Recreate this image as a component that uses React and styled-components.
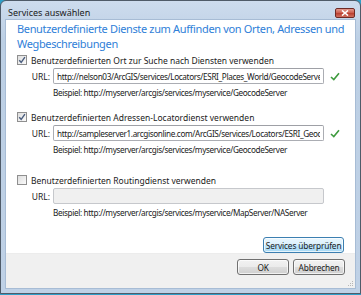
import React from "react";
import styled, { createGlobalStyle } from "styled-components";

const GlobalStyle = createGlobalStyle`
  html, body {
    margin: 0;
    padding: 0;
    background: #2f9fc9;
  }
  body {
    font-family: "Noto Sans", "Open Sans", sans-serif;
    color: #1e1e1e;
  }
`;

const sections = [
  {
    label: "Benutzerdefinierten Ort zur Suche nach Diensten verwenden",
    checked: true,
    url: "http://nelson03/ArcGIS/services/Locators/ESRI_Places_World/GeocodeServer",
    example: "Beispiel: http://myserver/arcgis/services/myservice/GeocodeServer",
    gap: 3,
  },
  {
    label: "Benutzerdefinierten Adressen-Locatordienst verwenden",
    checked: true,
    url: "http://sampleserver1.arcgisonline.com/ArcGIS/services/Locators/ESRI_Geocode_USA/GeocodeServer",
    example: "Beispiel: http://myserver/arcgis/services/myservice/GeocodeServer",
    gap: 12,
  },
  {
    label: "Benutzerdefinierten Routingdienst verwenden",
    checked: false,
    url: "",
    example: "Beispiel: http://myserver/arcgis/services/myservice/MapServer/NAServer",
    gap: 18,
  },
];

const App = () => {
  return (
    <>
      <GlobalStyle />
      <Window>
        <TitleBar>
          <Title>Services auswählen</Title>
          <CloseButton>
            <svg width="8" height="6" viewBox="0 0 8 6">
              <path d="M1 0.5 L7 5.5 M7 0.5 L1 5.5" stroke="#fff" strokeWidth="1.6" />
            </svg>
          </CloseButton>
        </TitleBar>
        <Frame>
          <Client>
            <Content>
              <Heading>
                Benutzerdefinierte Dienste zum Auffinden von Orten, Adressen und
                <br />
                Wegbeschreibungen
              </Heading>
              {sections.map((s) => (
                <Section key={s.label} $gap={s.gap}>
                  <CheckRow>
                    <CheckBox>
                      {s.checked && (
                        <svg width="8" height="8" viewBox="0 0 8 8">
                          <path d="M1.2 4.2 L3.2 6.3 L6.9 1.2" fill="none" stroke="#4a5d7e" strokeWidth="1.4" />
                        </svg>
                      )}
                    </CheckBox>
                    <Label>{s.label}</Label>
                  </CheckRow>
                  <UrlRow>
                    <UrlLabel>URL:</UrlLabel>
                    <UrlInput readOnly value={s.url} disabled={!s.checked} />
                    {s.checked && (
                      <OkMark width="10" height="9" viewBox="0 0 10 9">
                        <path d="M1 5 L3.8 7.6 L9 1.2" fill="none" stroke="#3e9b3e" strokeWidth="1.6" />
                      </OkMark>
                    )}
                  </UrlRow>
                  <Example>{s.example}</Example>
                </Section>
              ))}
              <CheckButtonRow>
                <Button $primary $width={81}>Services überprüfen</Button>
              </CheckButtonRow>
            </Content>
            <Footer>
              <Button $width={52}>OK</Button>
              <Button $width={52}>Abbrechen</Button>
              <Grip width="6" height="6" viewBox="0 0 6 6">
                <rect x="4" y="0" width="1" height="1" fill="#b7b7b7" />
                <rect x="2" y="2" width="1" height="1" fill="#b7b7b7" />
                <rect x="4" y="2" width="1" height="1" fill="#b7b7b7" />
                <rect x="0" y="4" width="1" height="1" fill="#b7b7b7" />
                <rect x="2" y="4" width="1" height="1" fill="#b7b7b7" />
                <rect x="4" y="4" width="1" height="1" fill="#b7b7b7" />
              </Grip>
            </Footer>
          </Client>
        </Frame>
      </Window>
    </>
  );
};

export default App;

const Window = styled.div`
  width: 361px;
  height: 294px;
  box-sizing: border-box;
  border: 1px solid #4f5b69;
  border-radius: 6px 6px 0 0;
  background: linear-gradient(#cddcee, #bccfe4 40px, #bfd1e6);
  display: flex;
  flex-direction: column;
  overflow: hidden;
`;

const TitleBar = styled.div`
  height: 18px;
  flex-shrink: 0;
  display: flex;
  justify-content: space-between;
  align-items: flex-start;
  padding-left: 7px;
  padding-right: 5px;
`;

const Title = styled.span`
  font-size: 9px;
  line-height: 10px;
  margin-top: 7px;
  color: #1b1b1b;
`;

const CloseButton = styled.div`
  width: 18px;
  height: 8px;
  margin-top: 7px;
  border: 1px solid #6e2a25;
  border-radius: 2px;
  background: linear-gradient(#e39a8e, #c9584a 50%, #b83c2d 51%, #d07060);
  display: flex;
  align-items: center;
  justify-content: center;
`;

const Frame = styled.div`
  flex: 1;
  min-height: 0;
  display: flex;
  padding: 0 8px 4px 4px;
`;

const Client = styled.div`
  flex: 1;
  min-height: 0;
  display: flex;
  flex-direction: column;
  border: 1px solid #a7bcd5;
  background: #fff;
`;

const Content = styled.div`
  flex: 1;
  min-height: 0;
  overflow: hidden;
  padding: 1px 11px 0 11px;
  display: flex;
  flex-direction: column;
`;

const Heading = styled.div`
  font-size: 11px;
  letter-spacing: -0.35px;
  line-height: 15px;
  white-space: nowrap;
  color: #2f80d8;
`;

const Section = styled.div`
  margin-top: ${(p) => p.$gap}px;
  display: flex;
  flex-direction: column;
`;

const CheckRow = styled.div`
  height: 12px;
  display: flex;
  align-items: center;
`;

const CheckBox = styled.span`
  width: 8px;
  height: 8px;
  border: 1px solid #8f8f8f;
  background: linear-gradient(135deg, #dedede, #fafafa);
  display: flex;
  align-items: center;
  justify-content: center;
  margin-right: 4px;
`;

const Label = styled.span`
  font-size: 8.5px;
  color: #1a1a1a;
  white-space: nowrap;
`;

const UrlRow = styled.div`
  margin-top: 2px;
  height: 16px;
  display: flex;
  align-items: center;
`;

const UrlLabel = styled.span`
  width: 36px;
  padding-right: 3px;
  box-sizing: border-box;
  text-align: right;
  font-size: 8.5px;
  color: #1a1a1a;
`;

const UrlInput = styled.input`
  width: 271px;
  height: 16px;
  box-sizing: border-box;
  margin: 0;
  padding: 0 3px;
  font-family: inherit;
  font-size: 8.2px;
  letter-spacing: -0.36px;
  color: #1a1a1a;
  border: 1px solid #abadb3;
  border-top-color: #9ea0a6;
  border-radius: 2px;
  background: #fff;
  outline: none;
  &:disabled {
    background: #f0f0f0;
    border-color: #c6c8cc;
  }
`;

const OkMark = styled.svg`
  margin-left: 6px;
`;

const Example = styled.div`
  margin-top: 3px;
  padding-left: 36px;
  font-size: 8.2px;
  letter-spacing: -0.36px;
  line-height: 12px;
  white-space: nowrap;
  color: #1a1a1a;
`;

const CheckButtonRow = styled.div`
  margin-top: 18px;
  display: flex;
  justify-content: flex-end;
`;

const Button = styled.button`
  width: ${(p) => (p.$width ? `${p.$width}px` : "auto")};
  height: 16px;
  padding: 0;
  font-family: inherit;
  font-size: 8.3px;
  letter-spacing: -0.15px;
  white-space: nowrap;
  color: #1a1a1a;
  border: 1px solid ${(p) => (p.$primary ? "#3c7fb1" : "#707070")};
  border-radius: 3px;
  background: ${(p) =>
    p.$primary
      ? "linear-gradient(#eaf6fd, #d9f0fc 50%, #bee6fd 51%, #a7d9f5)"
      : "linear-gradient(#f2f2f2, #ebebeb 50%, #dddddd 51%, #cfcfcf)"};
  box-shadow: inset 0 0 0 1px rgba(255, 255, 255, 0.7);
`;

const Footer = styled.div`
  height: 29px;
  flex-shrink: 0;
  position: relative;
  background: #f0f0f0;
  border-top: 1px solid #ececec;
  display: flex;
  justify-content: flex-end;
  align-items: flex-start;
  gap: 4px;
  padding: 5px 10px 0 0;
`;

const Grip = styled.svg`
  position: absolute;
  right: 1px;
  bottom: 1px;
`;
